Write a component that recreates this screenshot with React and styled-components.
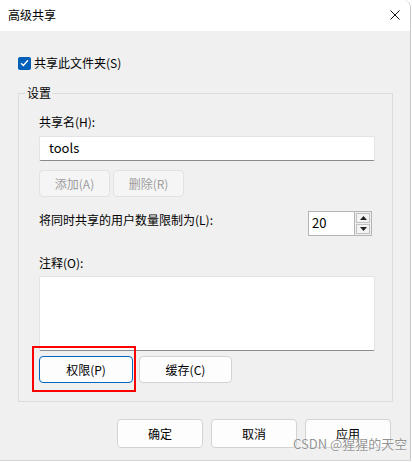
import React from "react";
import styled, { createGlobalStyle } from "styled-components";

const Global = createGlobalStyle`
  html, body { margin: 0; padding: 0; background: #ffffff; }
  body { font-family: "Noto Sans CJK SC", "Noto Sans", sans-serif; font-size: 12px; color: #000; }
  * { box-sizing: border-box; }
`;

const Window = styled.div`
  position: relative;
  width: 411px;
  height: 461px;
  background: #f0f0f0;
  border-right: 1px solid #c8c8c8;
  border-bottom: 1px solid #d6d6d6;
  border-top-right-radius: 8px;
  overflow: hidden;
  display: flex;
  flex-direction: column;
`;

const TitleBar = styled.div`
  height: 31px;
  flex: 0 0 31px;
  background: #ffffff;
  display: flex;
  align-items: center;
  justify-content: space-between;
  padding: 0 10px 1px 8px;
  font-size: 12px;
  line-height: 16px;
`;

const CloseIcon = () => (
  <svg width="10" height="10" viewBox="0 0 10 10">
    <path d="M0.5 0.5 L9.5 9.5 M9.5 0.5 L0.5 9.5" stroke="#111" strokeWidth="1" fill="none" />
  </svg>
);

const Content = styled.div`
  padding: 0 17px 0 18px;
  display: flex;
  flex-direction: column;
`;

const CheckRow = styled.label`
  margin-top: 24px;
  height: 16px;
  display: flex;
  align-items: center;
  gap: 3px;
  line-height: 16px;
`;

const CheckBox = styled.span`
  width: 13px;
  height: 13px;
  border-radius: 2px;
  background: #005fb8;
  display: inline-flex;
  align-items: center;
  justify-content: center;
`;

const Group = styled.fieldset`
  margin: 14px 0 0 0;
  padding: 0 17px 18px 20px;
  border: 1px solid #dcdcdc;
  min-width: 0;
`;

const Legend = styled.legend`
  padding: 0 2px;
  margin-left: -14px;
  line-height: 16px;
  font-size: 12px;
`;

const Label = styled.div`
  line-height: 16px;
  margin-top: ${(p) => p.$mt || 0}px;
`;

const TextBox = styled.div`
  margin-top: ${(p) => p.$mt || 0}px;
  height: ${(p) => p.$h}px;
  background: #ffffff;
  border: 1px solid #e3e3e3;
  border-bottom: 1px solid #8a8a8a;
  border-radius: 2px;
  padding: 3px 9px;
  font-size: 13px;
  line-height: 16px;
`;

const Row = styled.div`
  display: flex;
  gap: ${(p) => p.$gap || 0}px;
  margin-top: ${(p) => p.$mt || 0}px;
  align-items: ${(p) => p.$align || "center"};
  justify-content: ${(p) => p.$justify || "flex-start"};
`;

const Button = styled.div`
  position: relative;
  width: ${(p) => p.$w}px;
  height: ${(p) => p.$h || 27}px;
  border-radius: 4px;
  display: flex;
  align-items: center;
  justify-content: center;
  font-size: 12px;
  line-height: 16px;
  background: ${(p) => (p.$disabled ? "#f5f5f5" : "#fdfdfd")};
  color: ${(p) => (p.$disabled ? "#9d9d9d" : "#000")};
  border: 1px solid ${(p) => (p.$primary ? "#0067c0" : p.$disabled ? "#e2e2e2" : "#d3d3d3")};
`;

const Highlight = styled.div`
  position: absolute;
  left: -8px;
  top: -11px;
  width: 104px;
  height: 46px;
  border: 2px solid #f00;
  pointer-events: none;
`;

const LimitLabel = styled.div`
  line-height: 16px;
  margin-top: 1px;
  flex: 1;
`;

const Spinner = styled.div`
  display: flex;
  width: 64px;
  height: 25px;
  border: 1px solid #b4b4b4;
  background: #ffffff;
`;

const SpinValue = styled.div`
  flex: 1;
  padding: 3px 3px;
  font-size: 13px;
  line-height: 16px;
`;

const SpinButtons = styled.div`
  width: 17px;
  display: flex;
  flex-direction: column;
  gap: 1px;
  padding: 1px;
  background: #f0f0f0;
  border-left: 1px solid #b4b4b4;
`;

const SpinBtn = styled.div`
  flex: 1;
  background: #f3f3f3;
  border: 1px solid #c2c2c2;
  display: flex;
  align-items: center;
  justify-content: center;
`;

const Footer = styled.div`
  display: flex;
  justify-content: flex-end;
  gap: 8px;
  margin-top: 17px;
  padding-right: 2px;
`;

const Watermark = styled.div`
  position: absolute;
  left: 293px;
  top: 436px;
  font-size: 13px;
  line-height: 16px;
  color: rgba(110, 110, 110, 0.75);
  text-shadow: 0 0 1px #fff, 0 0 1px #fff;
  pointer-events: none;
  white-space: nowrap;
`;

const Tri = ({ up }) => (
  <svg width="7" height="4" viewBox="0 0 7 4">
    <path d={up ? "M0 4 L3.5 0 L7 4 Z" : "M0 0 L3.5 4 L7 0 Z"} fill="#222" />
  </svg>
);

export default function App() {
  return (
    <>
      <Global />
      <Window>
        <TitleBar>
          <span>高级共享</span>
          <CloseIcon />
        </TitleBar>
        <Content>
          <CheckRow>
            <CheckBox>
              <svg width="9" height="8" viewBox="0 0 9 8">
                <path d="M1 4.2 L3.4 6.5 L8 1.2" stroke="#fff" strokeWidth="1.3" fill="none" />
              </svg>
            </CheckBox>
            <span>共享此文件夹(S)</span>
          </CheckRow>
          <Group>
            <Legend>设置</Legend>
            <Label $mt={13}>共享名(H):</Label>
            <TextBox $mt={6} $h={25}>tools</TextBox>
            <Row $mt={9} $gap={3}>
              <Button $w={71} $disabled>添加(A)</Button>
              <Button $w={71} $disabled>删除(R)</Button>
            </Row>
            <Row $mt={14} $align="flex-start">
              <LimitLabel>将同时共享的用户数量限制为(L):</LimitLabel>
              <Spinner>
                <SpinValue>20</SpinValue>
                <SpinButtons>
                  <SpinBtn><Tri up /></SpinBtn>
                  <SpinBtn><Tri /></SpinBtn>
                </SpinButtons>
              </Spinner>
              <span style={{ width: 3 }} />
            </Row>
            <Label $mt={19}>注释(O):</Label>
            <TextBox $mt={5} $h={75} />
            <Row $mt={5} $gap={6}>
              <Button $w={94} $primary>
                权限(P)
                <Highlight />
              </Button>
              <Button $w={93}>缓存(C)</Button>
            </Row>
          </Group>
          <Footer>
            <Button $w={86} $h={29}>确定</Button>
            <Button $w={86} $h={29}>取消</Button>
            <Button $w={86} $h={29}>应用</Button>
          </Footer>
        </Content>
        <Watermark>CSDN @猩猩的天空</Watermark>
      </Window>
    </>
  );
}
